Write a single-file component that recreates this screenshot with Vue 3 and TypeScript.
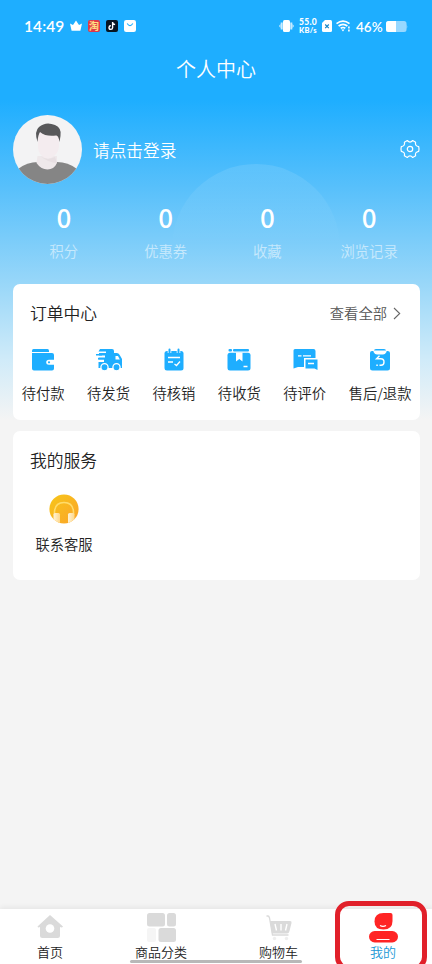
<script setup lang="ts">
interface Stat { label: string; value: number }
interface Order { label: string; icon: string }
interface Tab { label: string; icon: string; active?: boolean }

const stats: Stat[] = [
  { label: '积分', value: 0 },
  { label: '优惠券', value: 0 },
  { label: '收藏', value: 0 },
  { label: '浏览记录', value: 0 },
]

const orders: Order[] = [
  { label: '待付款', icon: 'wallet' },
  { label: '待发货', icon: 'truck' },
  { label: '待核销', icon: 'calendar' },
  { label: '待收货', icon: 'box' },
  { label: '待评价', icon: 'comment' },
  { label: '售后/退款', icon: 'refund' },
]

const tabs: Tab[] = [
  { label: '首页', icon: 'home' },
  { label: '商品分类', icon: 'grid' },
  { label: '购物车', icon: 'cart' },
  { label: '我的', icon: 'me', active: true },
]
</script>

<template>
  <div class="page">
    <svg class="waves" width="432" height="280" viewBox="0 0 432 280">
      <defs>
        <linearGradient id="bubble" gradientUnits="userSpaceOnUse" x1="0" y1="164" x2="0" y2="245">
          <stop offset="0" stop-color="#fff" stop-opacity=".11" />
          <stop offset="1" stop-color="#fff" stop-opacity="0" />
        </linearGradient>
      </defs>
      <circle cx="256" cy="248" r="84" fill="url(#bubble)" />
    </svg>

    <header class="status">
      <span class="clock">14:49</span>
      <svg class="crown" width="12" height="12" viewBox="0 0 12 12" fill="#fff"><path d="M0 3.5 3 5 6 .5 9 5l3-1.5-1.6 7.2H1.6Z" /></svg>
      <span class="app taobao">淘</span>
      <svg class="app-icon" width="12" height="12" viewBox="0 0 12 12">
        <rect width="12" height="12" rx="2" fill="#071521" />
        <path d="M6.6 2v5.7a1.8 1.8 0 1 1-1.7-1.9M6.6 2.3q.4 2 2.5 2.2" fill="none" stroke="#fff" stroke-width="1.4" />
      </svg>
      <svg class="app-icon" width="12" height="12" viewBox="0 0 12 12">
        <rect width="12" height="12" rx="2.2" fill="#fff" />
        <path d="M3.2 3.5Q6 7.8 8.8 3.5" fill="none" stroke="#1eaeff" stroke-width="1.2" />
      </svg>
      <span class="spacer"></span>
      <svg class="vibrate" width="15" height="12" viewBox="0 0 15 12" fill="#fff">
        <rect x="4" width="7" height="12" rx="1.6" />
        <path d="M0 6 1.4 4v4ZM15 6l-1.4-2v4ZM1.7 2.6h2v6.8h-2ZM11.3 2.6h2v6.8h-2Z" opacity=".75" />
      </svg>
      <span class="speed"><b>55.0</b><b class="unit">KB/s</b></span>
      <svg class="sim" width="10" height="12" viewBox="0 0 10 12">
        <path d="M3 0h5.5Q10 0 10 1.5v9Q10 12 8.5 12h-7Q0 12 0 10.5V3Z" fill="#fff" />
        <path d="m3.2 4.500 3.600 3.600m0-3.600L3.200 8.100" stroke="#1585c7" stroke-width="1.2" />
      </svg>
      <svg class="wifi" width="15" height="12" viewBox="0 0 15 12" fill="none" stroke="#fff" stroke-width="1.7">
        <path d="M.5 3.6q6.500-5 13 0M2.600 6q4.400-3.400 8.800 0M4.700 8.300q2.300-1.600 4.600 0" />
        <path d="m5.300 9.500 1.700 2 1.500-2Z" fill="#fff" stroke="none" />
        <path d="M12.900 6.500v2m0 1v2" stroke-width="1.6" />
      </svg>
      <span class="percent">46%</span>
      <svg class="battery" width="22" height="11" viewBox="0 0 22 11">
        <rect width="20.5" height="11" rx="2.5" fill="#98d8ff" />
        <path d="M2.500 0H10v11H2.500Q0 11 0 8.500v-6Q0 0 2.500 0Z" fill="#fff" />
        <path d="M20.500 3q1.500 2.500 0 5Z" fill="#98d8ff" />
      </svg>
    </header>

    <h1 class="title">个人中心</h1>

    <section class="profile">
      <svg class="avatar" width="69" height="69" viewBox="0 0 69 69">
        <defs><clipPath id="face"><circle cx="34.5" cy="34.5" r="34.5" /></clipPath></defs>
        <g clip-path="url(#face)">
          <rect width="69" height="69" fill="#f3f3f4" />
          <path d="M5 54Q14 47 25 47H44Q55 47 64 54V69H5Z" fill="#858585" />
          <path d="M24.500 41H44v7Q41 54.500 34.500 54.500T23.500 48Z" fill="#eee8ea" />
          <path d="M25 18Q34 13 46 19V32Q45 40 37 43.500Q34.500 44.500 32 43Q26 40 25 33Z" fill="#f4ecef" />
          <path d="M27 41Q34 46 42 42L44 48Q36 48 27 41Z" fill="#e7dfe2" />
          <path d="M24.500 27Q21 16 26 12Q33 6 42 10Q49 13 47.500 21L46.500 27Q45.500 20 43 20.500Q33 22 27 17Q25 20 24.500 27Z" fill="#58585a" />
        </g>
      </svg>
      <span class="login">请点击登录</span>
      <svg class="gear" width="20" height="20" viewBox="0 0 20 20" fill="none" stroke="#fff" stroke-width="1.2">
        <path d="M7.300 1.500Q10 4.600 12.700 1.500L15.600 3.200Q14.700 7 18.700 7.700Q19.300 10 18.700 12.300Q14.700 13 15.600 16.800L12.700 18.500Q10 15.400 7.300 18.500L4.400 16.800Q5.300 13 1.300 12.300Q.7 10 1.300 7.700Q5.300 7 4.400 3.200Z" stroke-linejoin="round" />
        <circle cx="10" cy="10" r="2.7" />
      </svg>
    </section>

    <section class="stats">
      <div v-for="s in stats" :key="s.label" class="stat">
        <strong>{{ s.value }}</strong>
        <span>{{ s.label }}</span>
      </div>
    </section>

    <section class="card orders">
      <div class="card-head">
        <h2>订单中心</h2>
        <a class="more">查看全部
          <svg width="8" height="13" viewBox="0 0 8 13" fill="none" stroke="#666" stroke-width="1.1"><path d="m1 1 5.700 5.500L1 12" /></svg>
        </a>
      </div>
      <div class="order-row">
        <div v-for="o in orders" :key="o.label" class="order">
          <svg width="28" height="24" viewBox="0 0 28 24" fill="#1eaeff">
            <template v-if="o.icon === 'wallet'">
              <path d="M3 2.500Q3 1 4.500 1H18.500Q20 1 20 2.500V4H3Z" />
              <path d="M3 5H23Q25 5 25 7V11.800H20Q17.200 11.800 17.200 14.300T20 16.800H25V20.500Q25 22.500 23 22.500H5Q3 22.500 3 20.500Z" />
              <circle cx="20" cy="14.3" r="1.1" />
            </template>
            <template v-else-if="o.icon === 'truck'">
              <path d="M5 1H17Q19 1 19 3V5H22Q24 5 25.300 8L27 11V20H3.500V14H9V11.500H3.500V9.500H10V7.500H4V5H11V3.500H3.500Z" />
              <path d="M1 6h6v1.400H1Zm2 4h7v1.400H3Z" />
              <path d="M20.500 8H23L24.800 11.500H20.500Z" fill="#fff" />
              <g stroke="#fff" stroke-width="1.3"><circle cx="9.5" cy="19.2" r="3.6" /><circle cx="21.5" cy="19.2" r="3.6" /></g>
            </template>
            <template v-else-if="o.icon === 'calendar'">
              <rect x="4.5" y="3" width="19" height="19.5" rx="2.5" />
              <path d="M9.500 0v5M18.500 0v5" stroke="#fff" stroke-width="3.6" />
              <path d="M9.500 1.500v3M18.500 1.500v3" stroke="#1eaeff" stroke-width="2" stroke-linecap="round" />
              <path d="M8 9.500H20M8 14H13M14.500 16l2 1.500 3.500-4" fill="none" stroke="#fff" stroke-width="1.3" />
            </template>
            <template v-else-if="o.icon === 'box'">
              <rect x="3.5" y="1" width="3.5" height="2.5" rx="1" /><rect x="8" y="1" width="16" height="2.5" rx="1" />
              <rect x="2.5" y="4.8" width="23" height="17.7" rx="2.5" />
              <path d="M11 4.500h6.500v9l-3.200-2.500-3.300 2.500Z" fill="#fff" />
              <path d="M18.500 18.500H22.500" stroke="#fff" stroke-width="1.5" />
            </template>
            <template v-else-if="o.icon === 'comment'">
              <path d="M2.500 2.500Q2.500 1 4 1H22.500Q24.500 1 24.500 3V10H13V19H7L2.500 20.500Z" />
              <path d="M14.500 11.500H26.500V22L23.500 20.500H14.500Z" />
              <path d="M7 7.800h3.500m1.500 0H20M17 15.500H23" stroke="#fff" stroke-width="1.3" />
            </template>
            <template v-else>
              <path d="M4 5Q4 3 6 3H7.500V4Q9 6.500 11 6.500H17Q19 6.500 20.500 4V3H21.500Q24 3 24 5V20Q24 22.500 21.500 22.500H6.500Q4 22.500 4 20Z" />
              <rect x="8.5" y="1" width="11" height="4" rx="1.8" fill="#fff" />
              <path d="M8 2.500Q8 1 10 1H18Q20 1 20 2.500Z" />
              <path d="M13.500 7.800 10.500 10.800H14.800Q18 10.800 18 14T15 17.300H13.500M10.300 17.300h1.500" fill="none" stroke="#fff" stroke-width="1.4" />
            </template>
          </svg>
          <span>{{ o.label }}</span>
        </div>
      </div>
    </section>

    <section class="card services">
      <h2>我的服务</h2>
      <div class="service">
        <svg width="30" height="30" viewBox="0 0 30 30">
          <defs>
            <linearGradient id="gold" x1="0" y1="0" x2="1" y2="1"><stop offset="0" stop-color="#f7c719" /><stop offset="1" stop-color="#fba32a" /></linearGradient>
            <linearGradient id="ear" x1="0" y1="0" x2="1" y2="0"><stop offset="0" stop-color="#fff3d6" /><stop offset="1" stop-color="#fed88b" /></linearGradient>
            <clipPath id="disc"><circle cx="15" cy="15" r="14.6" /></clipPath>
          </defs>
          <g clip-path="url(#disc)">
            <rect width="30" height="30" fill="url(#gold)" />
            <path d="M5.500 21V18Q6 8.500 15 8.500T24.500 18V21" fill="none" stroke="#ffdc6b" stroke-width="1.6" />
            <rect x="4.5" y="19" width="6.5" height="11" rx="1.5" fill="url(#ear)" /><rect x="19" y="19" width="6.5" height="11" rx="1.5" fill="url(#ear)" />
          </g>
        </svg>
        <span>联系客服</span>
      </div>
    </section>

    <nav class="tabs">
      <div v-for="t in tabs" :key="t.label" class="tab" :class="{ active: t.active }">
        <svg width="30" height="30" viewBox="0 0 30 30" fill="#dadada">
          <template v-if="t.icon === 'home'">
            <path d="M15 2 28 13.500Q27 15 25 14V22.500Q25 25 22.500 25H7.500Q5 25 5 22.500V14Q3 15 2.500 13.500Z" />
            <circle cx="15" cy="15.5" r="4.3" fill="#fff" />
          </template>
          <template v-else-if="t.icon === 'grid'">
            <rect x="1" width="18" height="13.5" rx="2.5" /><rect x="21" width="9" height="13.5" rx="2.5" />
            <rect x="1" y="15" width="9" height="14" rx="2" fill="#f5f5f5" /><rect x="12.5" y="15" width="17.5" height="14" rx="2.5" />
          </template>
          <template v-else-if="t.icon === 'cart'">
            <path d="M3.500 3H5Q6 3 6.500 5L9.500 22H25.500" fill="none" stroke="#dadada" stroke-width="1.3" />
            <path d="M7 8H27Q29 8 28.500 10L26.500 18Q26 20.500 24 20.500H9Z" />
            <path d="m12 11 1.500 6.500m4.500-6.500v6.500m6-6.500-1.500 6.500" stroke="#fff" stroke-width="1.4" />
            <circle cx="11.5" cy="25.5" r="1.7" fill="#eee" /><circle cx="23.5" cy="25.5" r="1.7" fill="#eee" />
          </template>
          <template v-else>
            <path d="M15.500 0H22.500Q24.500 0 24.500 2V8Q24.500 16.500 15.500 16.500T6.500 8.500Q6.500 0 15.500 0Z" fill="#ff2424" />
            <rect x="1" y="18" width="29" height="11.5" rx="5.7" fill="#ff2424" />
            <path d="M12 12.500q3 1.800 6 0M8.500 26.500H21.500" fill="none" stroke="#fff" stroke-width="1.2" />
          </template>
        </svg>
        <span>{{ t.label }}</span>
      </div>
      <i class="home-bar"></i>
      <i class="marker"></i>
    </nav>
  </div>
</template>

<style>
body { margin: 0; }
</style>

<style scoped>
.page {
  position: relative;
  display: flex;
  flex-direction: column;
  width: 432px;
  height: 964px;
  overflow: hidden;
  font-family: "Noto Sans CJK SC", sans-serif;
  font-weight: 350;
  color: #222;
  background: linear-gradient(#1eaeff 0, #1eaeff 100px, #58c0fb 188px, #96d6f9 280px, #d0ebf9 360px, #f4f4f4 420px);
}
.waves { position: absolute; left: 0; top: 0; }
.status, .title, .profile, .stats, .card { position: relative; }
svg { display: block; flex: none; }
h1, h2 { margin: 0; font-weight: 350; }

.status { display: flex; align-items: center; height: 52px; padding: 0 24px; box-sizing: border-box; color: #fff; }
.clock { width: 40px; margin-right: 6px; font: 600 15.5px/20px Lato, sans-serif; letter-spacing: .1px; white-space: nowrap; }
.taobao { width: 12px; height: 12px; margin-left: 6px; border-radius: 2px; background: #e0394a; color: #ffe083; font-size: 10px; line-height: 11px; font-weight: 700; text-align: center; }
.app-icon { margin-left: 6px; }
.spacer { flex: 1; }
.speed { display: flex; flex-direction: column; width: 20px; margin: 0 4px; font: 700 8.5px/9px Lato, sans-serif; letter-spacing: .3px; align-items: center; }
.speed b { height: 9px; }
.speed .unit { height: 8px; font-size: 7.5px; line-height: 8px; }
.wifi { margin-left: 4px; }
.percent { width: 27px; margin: 2px 3px 0 5px; font: 600 13.5px/18px Lato, sans-serif; white-space: nowrap; }

.title { height: 34px; color: #fff; font-size: 20px; line-height: 34px; text-align: center; }
.profile { display: flex; align-items: center; height: 69px; margin-top: 29px; padding: 0 12px 0 13px; }
.login { flex: 1; margin-left: 11px; color: #fff; font-size: 16.7px; line-height: 24px; }
.gear { margin-top: -1px; }
.stats { display: grid; grid-template-columns: repeat(4, 1fr); margin: 16px 12px 0 13px; height: 84px; }
.stat { display: flex; flex-direction: column; align-items: center; color: #fff; }
.stat strong { font-size: 26px; line-height: 34px; font-weight: 500; }
.stat span { margin-top: 6px; font-size: 14.3px; line-height: 22px; opacity: .55; }

.card { box-sizing: border-box; margin: 0 12px 0 13px; border-radius: 7px; background: #fff; }
.card h2 { font-size: 16.8px; line-height: 24px; }
.orders { height: 136px; padding-top: 17px; }
.card-head { display: flex; justify-content: space-between; align-items: center; height: 24px; padding: 0 19px 0 17px; }
.more { display: flex; align-items: center; gap: 6px; color: #555; font-size: 14.3px; line-height: 22px; }
.order-row { display: flex; gap: 22.5px; margin-top: 23px; padding-left: 8.7px; }
.order { display: flex; flex-direction: column; align-items: center; font-size: 14.3px; line-height: 22px; color: #222; white-space: nowrap; }
.order svg { margin-bottom: 10px; }
.services { height: 149px; margin-top: 11px; padding: 17px 17px; }
.service { display: flex; flex-direction: column; align-items: center; width: 68px; margin-top: 22px; font-size: 14.3px; line-height: 22px; }
.service svg { margin-bottom: 9px; }

.tabs { position: relative; display: flex; justify-content: space-around; height: 55px; margin-top: auto; padding-left: 1px; background: #fff; box-shadow: 0 -2px 5px rgba(0, 0, 0, .06); }
.tab { display: flex; flex-direction: column; align-items: center; padding-top: 4px; font-size: 13px; line-height: 18px; color: #222; }
.tab svg { margin: 0 -2px; }
.tab.active { color: #2097d5; }
.home-bar { position: absolute; left: 130px; top: 51px; width: 172px; height: 3px; border-radius: 2px; background: #b8b8b8; }
.marker { position: absolute; left: 335px; top: -8px; width: 92px; height: 70px; box-sizing: border-box; border: 5px solid #e1202a; border-radius: 14px; }
</style>
